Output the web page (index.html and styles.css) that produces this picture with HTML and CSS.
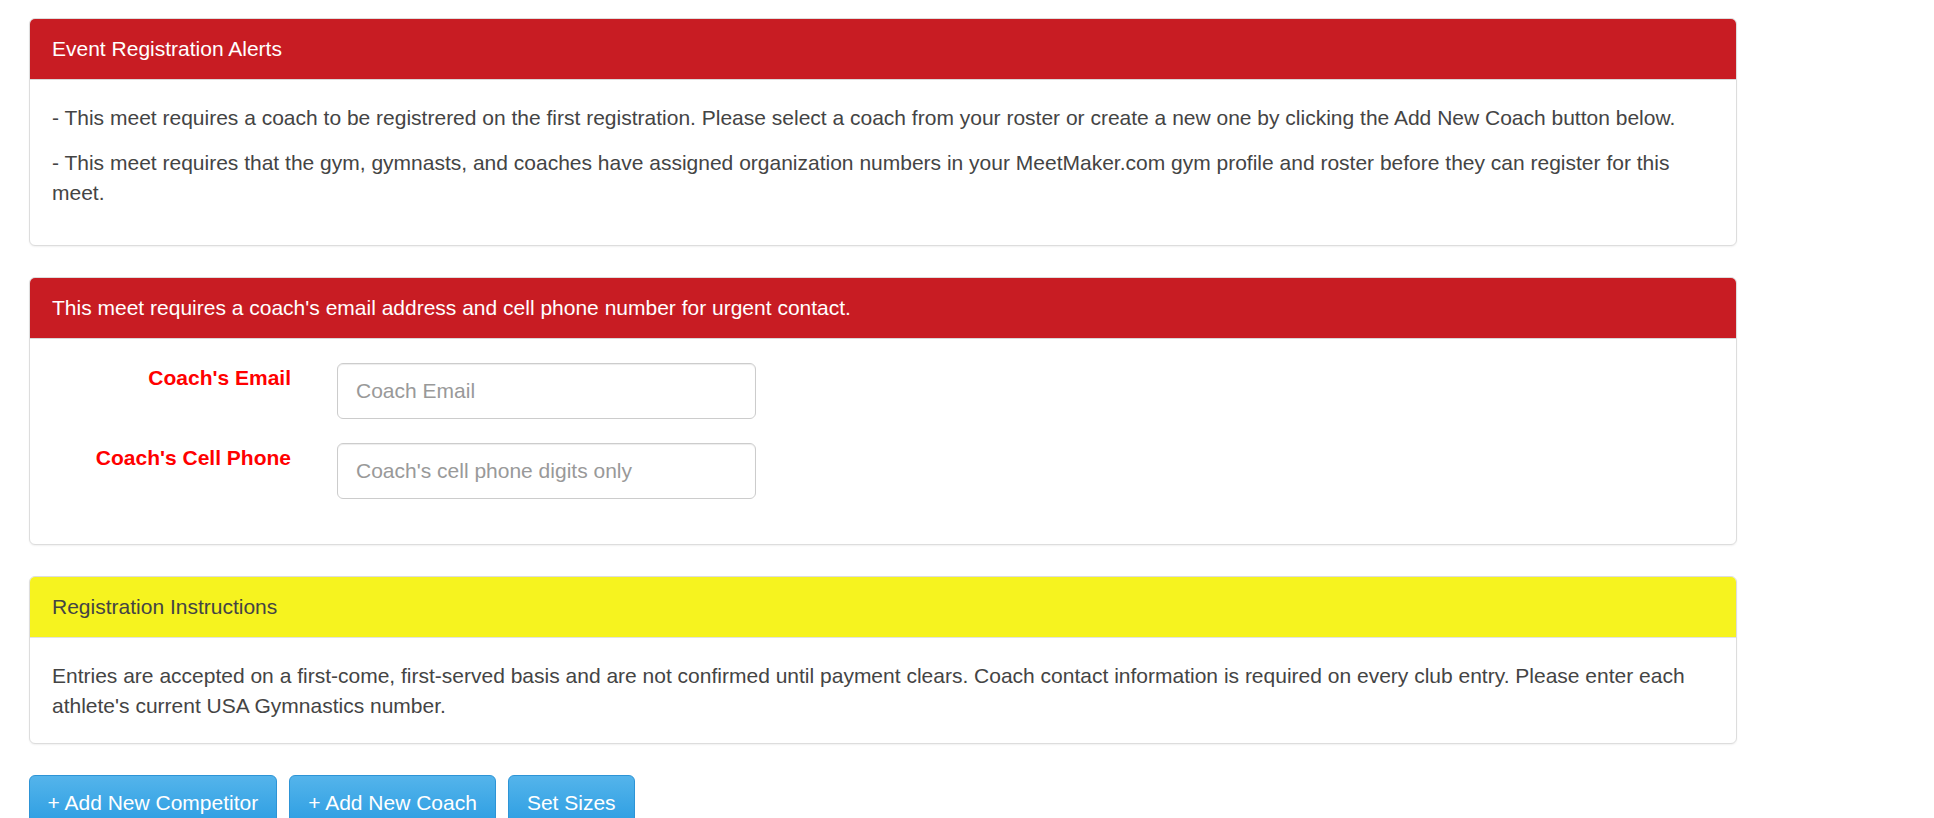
FILE: index.html
```html
<!DOCTYPE html>
<html lang="en">
<head>
<meta charset="utf-8">
<title>Event Registration</title>
<link rel="stylesheet" href="styles.css">
</head>
<body>
<div class="page">
  <section class="panel">
    <div class="panel-heading heading-red">Event Registration Alerts</div>
    <div class="panel-body">
      <p>- This meet requires a coach to be registrered on the first registration. Please select a coach from your roster or create a new one by clicking the Add New Coach button below.</p>
      <p class="last">- This meet requires that the gym, gymnasts, and coaches have assigned organization numbers in your MeetMaker.com gym profile and roster before they can register for this meet.</p>
    </div>
  </section>

  <section class="panel">
    <div class="panel-heading heading-red">This meet requires a coach's email address and cell phone number for urgent contact.</div>
    <div class="panel-body form-body">
      <div class="form-row">
        <label class="form-label" for="coachEmail">Coach's Email</label>
        <input class="form-input" id="coachEmail" type="text" placeholder="Coach Email">
      </div>
      <div class="form-row">
        <label class="form-label" for="coachPhone">Coach's Cell Phone</label>
        <input class="form-input" id="coachPhone" type="text" placeholder="Coach's cell phone digits only">
      </div>
    </div>
  </section>

  <section class="panel">
    <div class="panel-heading heading-yellow">Registration Instructions</div>
    <div class="panel-body">
      <p class="only">Entries are accepted on a first-come, first-served basis and are not confirmed until payment clears. Coach contact information is required on every club entry. Please enter each athlete's current USA Gymnastics number.</p>
    </div>
  </section>

  <div class="actions">
    <button class="btn" type="button">+ Add New Competitor</button>
    <button class="btn" type="button">+ Add New Coach</button>
    <button class="btn" type="button">Set Sizes</button>
  </div>
</div>
</body>
</html>
```

FILE: styles.css
```css
* {
  box-sizing: border-box;
}

html, body {
  margin: 0;
  padding: 0;
  background: #fff;
}

body {
  font-family: "Liberation Sans", Arial, Helvetica, sans-serif;
  font-size: 21px;
  line-height: 30px;
  color: #444;
  overflow: hidden;
}

.page {
  width: 1737px;
  padding: 18px 0 0 28.5px;
}

.panel {
  background: #fff;
  border: 1px solid #ddd;
  border-radius: 6px;
  box-shadow: 0 1px 2px rgba(0, 0, 0, 0.06);
  margin-bottom: 31px;
  overflow: hidden;
}

.panel-heading {
  padding: 14.5px 22.5px 15.5px;
  border-bottom: 1px solid #ddd;
  font-size: 21px;
  line-height: 30px;
}

.heading-red {
  background: #c81c23;
  color: #fff;
  border-bottom-color: #d8d8d8;
}

.heading-yellow {
  background: #f6f31f;
  color: #444;
  border-bottom-color: #e2e2e2;
}

.panel-body {
  padding: 22.5px;
}

.panel-body p {
  margin: 0 0 15px;
}

.panel-body p.last {
  margin-bottom: 15px;
}

.panel-body p.only {
  margin: 0;
}

.form-body {
  padding-top: 23.5px;
}

.form-row {
  display: flex;
  align-items: flex-start;
  margin-bottom: 24px;
}

.form-row:last-child {
  margin-bottom: 23px;
}

.form-label {
  width: 239px;
  flex: none;
  text-align: right;
  font-weight: bold;
  color: #f00;
  padding-top: 0;
  margin-right: 46px;
}

.form-input {
  width: 419px;
  height: 56px;
  padding: 0 18px;
  border: 1px solid #ccc;
  border-radius: 6px;
  box-shadow: inset 0 1px 1px rgba(0, 0, 0, 0.075);
  font-family: "Liberation Sans", Arial, Helvetica, sans-serif;
  font-size: 21px;
  color: #555;
  background: #fff;
  outline: none;
}

.form-input::placeholder {
  color: #999;
}

.actions {
  display: flex;
  gap: 12px;
  margin-top: 31px;
}

.btn {
  font-family: "Liberation Sans", Arial, Helvetica, sans-serif;
  font-size: 21px;
  line-height: 30px;
  color: #fff;
  padding: 12px 18px 8px;
  border: 1px solid #2d94d6;
  border-radius: 6px;
  background: linear-gradient(to bottom, #54b4eb 0%, #2b9de2 100%);
  cursor: pointer;
}
```
